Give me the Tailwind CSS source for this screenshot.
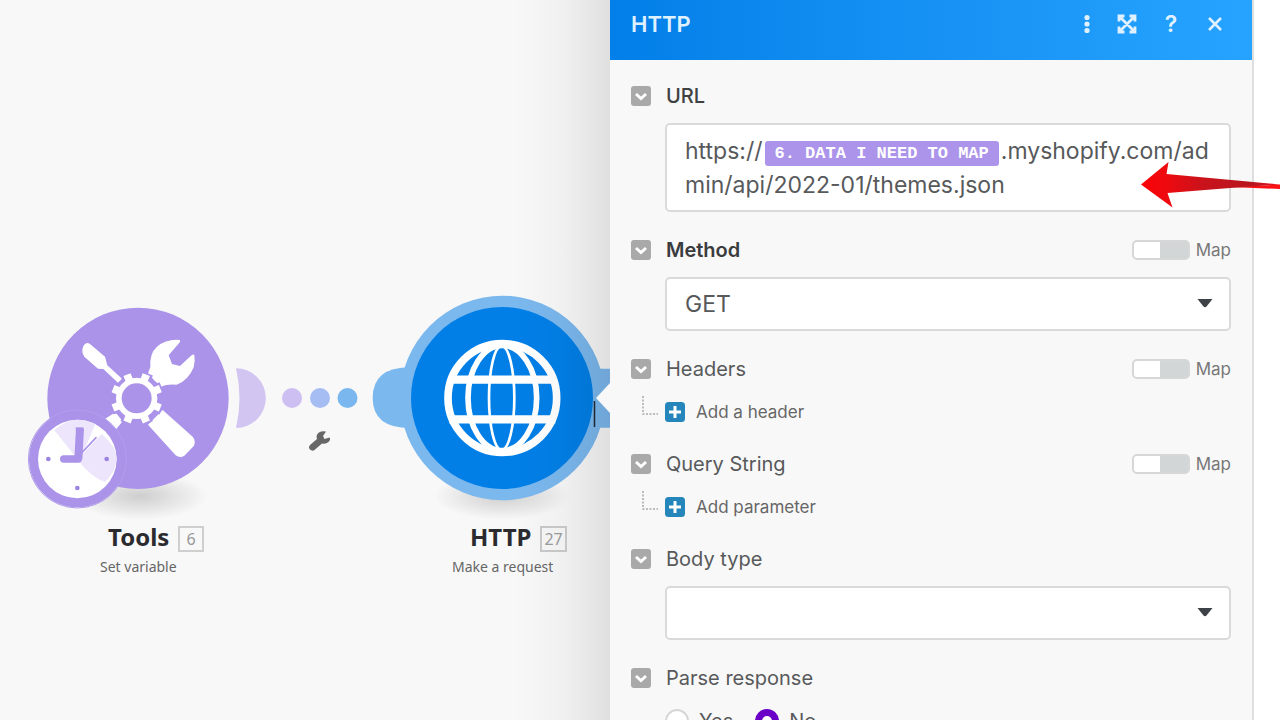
<!DOCTYPE html>
<html lang="en">
<head>
<meta charset="utf-8">
<title>HTTP module</title>
<script src="https://cdn.jsdelivr.net/npm/@tailwindcss/browser@4"></script>
</head>
<body class="bg-white font-['Inter',sans-serif] text-[#57595b]">
<svg class="hidden">
  <symbol id="chev" viewBox="0 0 20 20"><rect width="20" height="20" rx="3" fill="#a9a9a9"/><path d="M5 8l5 4.500L15 8" fill="none" stroke="#fff" stroke-width="3"/></symbol>
  <symbol id="plus" viewBox="0 0 20 20"><rect width="20" height="20" rx="3.500" fill="#2486bb"/><path d="M10 4v12M4 10h12" stroke="#fff" stroke-width="3"/></symbol>
  <symbol id="branch" viewBox="0 0 16 20"><path d="M1 0v18h15" fill="none" stroke="#a8a8a8" stroke-width="1.500" stroke-dasharray="2 1.500"/></symbol>
  <symbol id="caret" viewBox="0 0 16 9"><path d="M.5 0h15L9.500 7.500Q8 9 6.500 7.500z" fill="#3d4248"/></symbol>
</svg>
<div class="relative flex h-screen overflow-hidden">
  <main class="relative min-w-0 flex-1 overflow-hidden bg-[#f8f8f8] font-['Noto_Sans',sans-serif]">
    <svg class="absolute top-0 left-0" width="610" height="720" viewBox="0 0 610 720" role="img" aria-label="Tools connected to HTTP">
      <defs>
        <radialGradient id="sh"><stop offset="0" stop-color="#000" stop-opacity=".17"/><stop offset="1" stop-color="#000" stop-opacity="0"/></radialGradient>
      </defs>
      <ellipse cx="140" cy="496" rx="68" ry="24" fill="url(#sh)"/>
      <ellipse cx="502" cy="496" rx="68" ry="24" fill="url(#sh)"/>
      <g transform="translate(20 290) scale(.33333)">
        <circle cx="354" cy="325" r="272" fill="#aa93e9"/>
        <path d="M648 235A89 89 0 0 1 648 414Q669 325 648 235z" fill="#d2c5f1"/>
        <g fill="#fff">
          <path d="M190 168Q198 154 210 162L255 200L262 226L306 266L294 278L250 237L234 236L193 200Q183 186 190 168z"/>
          <path d="M480 150Q440 146 411 170Q388 190 391 232L384 250L404 272L424 290Q440 282 470 284Q505 272 521 232Q526 212 523 194Q518 192 512 198L480 228L456 222L446 196L480 156z"/>
          <path d="M384 404L428 360L518 440Q528 452 522 467L493 497Q480 505 467 496z"/>
          <path d="M256 386L286 367L308 394L288 418z"/>
        </g>
        <g stroke="#aa93e9" stroke-width="38">
          <path d="M381 249L319 401M426 294L274 356M426 356L274 294M381 401L319 249"/>
        </g>
        <circle cx="350" cy="325" r="68" fill="#aa93e9"/>
        <g stroke="#fff" stroke-width="23"><path d="M379 254L321 396M421 296L279 354M421 354L279 296M379 396L321 254"/></g>
        <circle cx="350" cy="325" r="62" fill="#fff"/>
        <circle cx="350" cy="325" r="45" fill="#aa93e9"/>
        <circle cx="172" cy="507" r="147" fill="none" stroke="#b3a0ec" stroke-width="3"/>
        <circle cx="172" cy="507" r="145" fill="#aa93e9"/>
        <circle cx="172" cy="507" r="118" fill="#fff"/>
        <path d="M172 507L103 421Q137 389 172 389Q199 389 226 402L190 490L245 431Q290 470 290 507Q288 545 255 576Q210 560 172 507z" fill="#ece5fb"/>
        <path d="M226 402L190 490L245 431z" fill="#fff"/>
        <g fill="none" stroke="#aa93e9" stroke-linejoin="round"><path d="M167 415H190" stroke-width="6"/><path d="M180 415L175 507" stroke-width="24"/><path d="M175 507H131" stroke-width="22" stroke-linecap="round"/><path d="M228 443L182 492" stroke-width="5" stroke-linecap="round"/></g>
        <g fill="#9c83e0"><circle cx="85" cy="507" r="7"/><circle cx="260" cy="507" r="7"/><circle cx="172" cy="594" r="7"/></g>
      </g>
      <circle cx="292" cy="398" r="10" fill="#cdbff1"/><circle cx="320" cy="398" r="10" fill="#a6bdf3"/><circle cx="347.500" cy="398" r="10" fill="#7ab7ee"/>
      <path d="M326 431.500l-3 4.500 1.500 3 5-1.500q1.500 2-1 4.500-3 2.500-6.500 1.500l-7.500 6.500q-2.500 1.500-4.500-.5-2-2 0-4.500l7-6q-1.500-4 2-6.500 3-2 7-1z" fill="#676767"/>
      <g transform="translate(360 280) scale(.33333)">
        <path d="M150 262Q38 262 38 354Q38 444 150 444z" fill="#7bb8ee"/>
        <path d="M690 266H750V443H690z" fill="#7bb8ee"/>
        <circle cx="427" cy="354" r="307" fill="#7bb8ee"/>
        <circle cx="426" cy="354" r="273" fill="#017fe7"/>
        <g fill="none" stroke="#fff">
          <circle cx="427" cy="354" r="163" stroke-width="23"/>
          <ellipse cx="427" cy="354" rx="103" ry="158" stroke-width="17"/>
          <ellipse cx="425" cy="354" rx="38" ry="156" stroke-width="8"/>
          <path d="M268 299H586M268 418H586" stroke-width="25"/>
        </g>
      </g>
    </svg>
    <div class="absolute inset-y-0 right-0 w-24 bg-linear-to-r from-black/0 via-black/3 to-black/10"></div>
    <svg class="absolute top-[383px] right-0" width="17" height="46" viewBox="0 0 17 46"><path d="M17 0L3 15l14 15z" fill="#f8f8f8"/><path d="M1.500 18v26" stroke="#1c2733" stroke-width="1.500"/></svg>
    <div class="absolute top-[520px] left-[100px] flex flex-col">
      <div class="flex items-center gap-[9px] pl-2"><h2 class="text-2xl leading-[34px] font-bold text-[#2b2b2f]">Tools</h2><span class="mt-1 border-2 border-[#cfcfcf] px-[6px] text-base leading-[22px] text-[#999]">6</span></div>
      <p class="text-sm leading-[26px] text-[#666]">Set variable</p>
    </div>
    <div class="absolute top-[520px] left-[452px] flex flex-col">
      <div class="flex items-center gap-[9px] pl-[18px]"><h2 class="text-2xl leading-[34px] font-bold text-[#2b2b2f]">HTTP</h2><span class="mt-1 border-2 border-[#c6c6c6] px-[2px] text-base leading-[22px] text-[#999]">27</span></div>
      <p class="text-sm leading-[26px] text-[#666]">Make a request</p>
    </div>
  </main>

  <section class="mr-[26px] w-3/5 max-w-[644px] shrink-0 border-r-2 border-[#dedede] bg-[#f8f8f8]">
    <header class="flex h-[60px] items-center bg-linear-to-r from-[#027fe8] to-[#26a3ff] pr-[27px] pb-3 pl-[21px] text-[#dff1ff]">
      <h1 class="flex-1 text-[22px] leading-7 font-semibold">HTTP</h1>
      <div class="flex items-center gap-[26px]">
        <button type="button" aria-label="More"><svg width="8" height="20" viewBox="0 0 8 20" fill="currentColor"><circle cx="4" cy="3.500" r="2.600"/><circle cx="4" cy="10" r="2.600"/><circle cx="4" cy="16.500" r="2.600"/></svg></button>
        <button type="button" aria-label="Expand"><svg width="20" height="20" viewBox="0 0 20 20"><path d="M2 7.500V2h5.500M12.500 2H18v5.500M18 12.500V18h-5.500M7.500 18H2v-5.500M3 3l14 14M17 3L3 17" fill="none" stroke="currentColor" stroke-width="2.800"/></svg></button>
        <button type="button" aria-label="Help" class="w-4 text-[23px] leading-7 font-semibold">?</button>
        <button type="button" aria-label="Close"><svg width="20" height="20" viewBox="0 0 20 20"><path d="M4 4l12 12M16 4L4 16" fill="none" stroke="currentColor" stroke-width="2.600"/></svg></button>
      </div>
    </header>
    <form class="flex flex-col gap-6 px-[21px] pt-[22px] text-xl leading-7">
      <div class="flex flex-col gap-[13px]">
        <div class="flex items-center gap-[15px]"><button type="button" aria-label="Collapse URL"><svg class="size-5"><use href="#chev"/></svg></button><span id="url" class="font-medium text-[#3f4143]">URL</span></div>
        <div role="textbox" aria-labelledby="url" contenteditable="true" class="ml-[34px] rounded-[5px] border-2 border-[#dadada] bg-white px-[18px] pt-[9px] pb-2 text-[23px] leading-[34px] break-all">https://<span class="mx-[2px] inline-block rounded-[3px] bg-[#ab94ea] px-[10px] align-[1px] font-['Liberation_Mono',monospace] text-[17px] leading-[25px] font-bold whitespace-nowrap text-white">6. DATA I NEED TO MAP</span>.myshopify.com/admin/api/2022-01/themes.json</div>
      </div>
      <div class="flex flex-col gap-[13px]">
        <div class="flex items-center gap-[15px]"><button type="button" aria-label="Collapse Method"><svg class="size-5"><use href="#chev"/></svg></button><label for="method" class="flex-1 font-semibold text-[#3a3c3e]">Method</label>
          <label class="flex items-center gap-[6px] text-[17px] leading-7 text-[#777]"><input type="checkbox" class="h-5 w-[58px] appearance-none rounded-[5px] border-2 border-[#d6d8d8] bg-[#d3d6d6] bg-[linear-gradient(#fff,#fff)] bg-[length:26px_100%] bg-no-repeat">Map</label></div>
        <div class="relative ml-[34px]"><select id="method" class="h-[54px] w-full appearance-none rounded-[5px] border-2 border-[#dadada] bg-white px-[18px] text-[23px]"><option>GET</option></select><svg class="pointer-events-none absolute top-[22px] right-[18px]" width="16" height="9"><use href="#caret"/></svg></div>
      </div>
      <div class="flex flex-col gap-[14px]">
        <div class="flex items-center gap-[15px]"><button type="button" aria-label="Collapse Headers"><svg class="size-5"><use href="#chev"/></svg></button><span class="flex-1">Headers</span>
          <label class="flex items-center gap-[6px] text-[17px] leading-7 text-[#777]"><input type="checkbox" class="h-5 w-[58px] appearance-none rounded-[5px] border-2 border-[#d6d8d8] bg-[#d3d6d6] bg-[linear-gradient(#fff,#fff)] bg-[length:26px_100%] bg-no-repeat">Map</label></div>
        <button type="button" class="flex h-[29px] items-center gap-[7px] pl-[11px] text-[17px] leading-7 text-[#666]"><svg class="mb-3" width="16" height="20"><use href="#branch"/></svg><svg class="size-5"><use href="#plus"/></svg><span class="pl-1">Add a header</span></button>
      </div>
      <div class="flex flex-col gap-[14px]">
        <div class="flex items-center gap-[15px]"><button type="button" aria-label="Collapse Query String"><svg class="size-5"><use href="#chev"/></svg></button><span class="flex-1">Query String</span>
          <label class="flex items-center gap-[6px] text-[17px] leading-7 text-[#777]"><input type="checkbox" class="h-5 w-[58px] appearance-none rounded-[5px] border-2 border-[#d6d8d8] bg-[#d3d6d6] bg-[linear-gradient(#fff,#fff)] bg-[length:26px_100%] bg-no-repeat">Map</label></div>
        <button type="button" class="flex h-[29px] items-center gap-[7px] pl-[11px] text-[17px] leading-7 text-[#666]"><svg class="mb-3" width="16" height="20"><use href="#branch"/></svg><svg class="size-5"><use href="#plus"/></svg><span class="pl-1">Add parameter</span></button>
      </div>
      <div class="flex flex-col gap-[13px]">
        <div class="flex items-center gap-[15px]"><button type="button" aria-label="Collapse Body type"><svg class="size-5"><use href="#chev"/></svg></button><label for="body">Body type</label></div>
        <div class="relative ml-[34px]"><select id="body" class="h-[54px] w-full appearance-none rounded-[5px] border-2 border-[#dadada] bg-white px-[18px] text-[23px]"><option></option></select><svg class="pointer-events-none absolute top-[22px] right-[18px]" width="16" height="9"><use href="#caret"/></svg></div>
      </div>
      <div class="flex flex-col gap-[15px]">
        <div class="flex items-center gap-[15px]"><button type="button" aria-label="Collapse Parse response"><svg class="size-5"><use href="#chev"/></svg></button><span>Parse response</span></div>
        <div class="flex gap-[22px] pl-[34px]"><label class="flex items-center gap-[10px]"><input type="radio" name="parse" class="size-6 appearance-none rounded-full border-2 border-[#d6d6d6] bg-white">Yes</label><label class="flex items-center gap-[10px]"><input type="radio" name="parse" checked class="size-6 appearance-none rounded-full border-[7px] border-[#6a00c8] bg-white">No</label></div>
      </div>
    </form>
  </section>
  <svg class="absolute top-[160px] right-0" width="140" height="50" viewBox="0 0 140 50" aria-hidden="true">
    <defs><linearGradient id="ar"><stop offset="0" stop-color="#fb0207"/><stop offset=".2" stop-color="#ec0a10"/><stop offset=".45" stop-color="#c9131c"/><stop offset=".8" stop-color="#b7151f"/><stop offset="1" stop-color="#e8141c"/></linearGradient></defs>
    <path d="M90 27L140 24.500V29z" fill="#fa1015"/>
    <path d="M1 24.500L28.500 2L26.500 14L140 24.500L90 28L27.500 33L32.500 47.500z" fill="url(#ar)"/>
  </svg>
</div>
</body>
</html>
